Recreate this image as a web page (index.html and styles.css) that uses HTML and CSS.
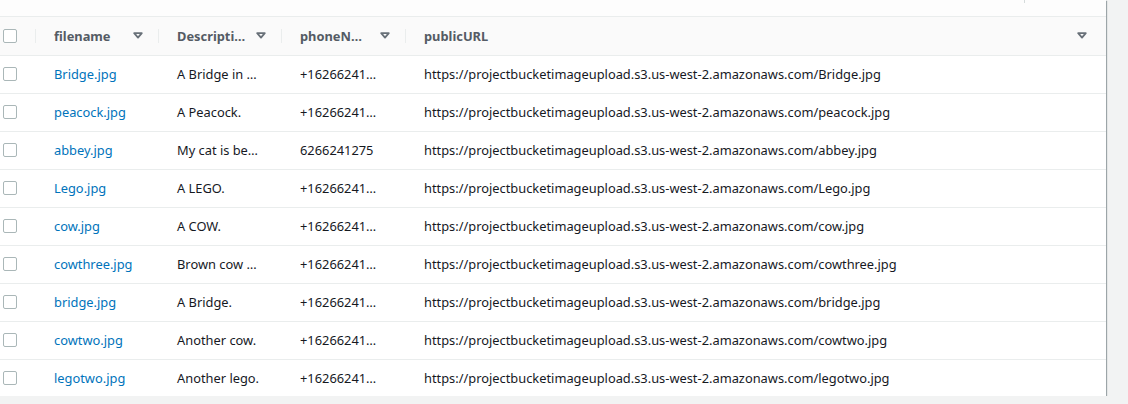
FILE: index.html
```html
<!DOCTYPE html>
<html>
<head>
<meta charset="utf-8">
<link rel="stylesheet" href="styles.css">
</head>
<body>
<div class="card">
  <div class="top"><span class="tick"></span></div>
  <table class="grid">
    <colgroup>
      <col class="c-check"><col class="c-file"><col class="c-desc"><col class="c-phone"><col class="c-url">
    </colgroup>
    <thead>
      <tr>
        <th class="check"><span class="box"></span></th>
        <th><div class="hd"><span class="lbl">filename</span><svg class="caret" viewBox="0 0 10 7" width="10" height="7"><path d="M1.2 1.2 H8.8 L5 5.6 Z" fill="none" stroke="#687078" stroke-width="1.8" stroke-linejoin="round"/></svg></div></th>
        <th class="sep"><div class="hd"><span class="lbl">Descripti…</span><svg class="caret" viewBox="0 0 10 7" width="10" height="7"><path d="M1.2 1.2 H8.8 L5 5.6 Z" fill="none" stroke="#687078" stroke-width="1.8" stroke-linejoin="round"/></svg></div></th>
        <th class="sep"><div class="hd"><span class="lbl">phoneN…</span><svg class="caret" viewBox="0 0 10 7" width="10" height="7"><path d="M1.2 1.2 H8.8 L5 5.6 Z" fill="none" stroke="#687078" stroke-width="1.8" stroke-linejoin="round"/></svg></div></th>
        <th class="sep last"><div class="hd"><span class="lbl">publicURL</span><svg class="caret" viewBox="0 0 10 7" width="10" height="7"><path d="M1.2 1.2 H8.8 L5 5.6 Z" fill="none" stroke="#687078" stroke-width="1.8" stroke-linejoin="round"/></svg></div></th>
      </tr>
    </thead>
    <tbody>
      <tr><td class="check"><span class="box"></span></td><td><a>Bridge.jpg</a></td><td>A Bridge in …</td><td>+16266241…</td><td>https://projectbucketimageupload.s3.us-west-2.amazonaws.com/Bridge.jpg</td></tr>
      <tr><td class="check"><span class="box"></span></td><td><a>peacock.jpg</a></td><td>A Peacock.</td><td>+16266241…</td><td>https://projectbucketimageupload.s3.us-west-2.amazonaws.com/peacock.jpg</td></tr>
      <tr><td class="check"><span class="box"></span></td><td><a>abbey.jpg</a></td><td>My cat is be…</td><td>6266241275</td><td>https://projectbucketimageupload.s3.us-west-2.amazonaws.com/abbey.jpg</td></tr>
      <tr><td class="check"><span class="box"></span></td><td><a>Lego.jpg</a></td><td>A LEGO.</td><td>+16266241…</td><td>https://projectbucketimageupload.s3.us-west-2.amazonaws.com/Lego.jpg</td></tr>
      <tr><td class="check"><span class="box"></span></td><td><a>cow.jpg</a></td><td>A COW.</td><td>+16266241…</td><td>https://projectbucketimageupload.s3.us-west-2.amazonaws.com/cow.jpg</td></tr>
      <tr><td class="check"><span class="box"></span></td><td><a>cowthree.jpg</a></td><td>Brown cow …</td><td>+16266241…</td><td>https://projectbucketimageupload.s3.us-west-2.amazonaws.com/cowthree.jpg</td></tr>
      <tr><td class="check"><span class="box"></span></td><td><a>bridge.jpg</a></td><td>A Bridge.</td><td>+16266241…</td><td>https://projectbucketimageupload.s3.us-west-2.amazonaws.com/bridge.jpg</td></tr>
      <tr><td class="check"><span class="box"></span></td><td><a>cowtwo.jpg</a></td><td>Another cow.</td><td>+16266241…</td><td>https://projectbucketimageupload.s3.us-west-2.amazonaws.com/cowtwo.jpg</td></tr>
      <tr><td class="check"><span class="box"></span></td><td><a>legotwo.jpg</a></td><td>Another lego.</td><td>+16266241…</td><td>https://projectbucketimageupload.s3.us-west-2.amazonaws.com/legotwo.jpg</td></tr>
    </tbody>
  </table>
</div>
</body>
</html>
```
FILE: styles.css
```css
html, body {
  margin: 0;
  padding: 0;
  background: #f2f3f3;
}
body {
  font-family: "Noto Sans", "Open Sans", sans-serif;
  font-size: 12.85px;
  color: #16191f;
}
.card {
  width: 1106px;
  background: #ffffff;
  box-shadow: 0 1px 1px 0 rgba(0, 28, 36, 0.45), 1px 1px 1px 0 rgba(0, 28, 36, 0.3);
}
.top {
  height: 17px;
  background: #fdfdfd;
  border-bottom: 1px solid #eaeded;
  box-sizing: border-box;
  position: relative;
}
.tick {
  position: absolute;
  left: 1024px;
  top: 0;
  width: 1px;
  height: 3px;
  background: #d5dbdb;
}
.grid {
  width: 1106px;
  border-collapse: collapse;
  table-layout: fixed;
}
.c-check { width: 35px; }
.c-file { width: 123px; }
.c-desc { width: 123px; }
.c-phone { width: 124px; }
.c-url { width: auto; }
th, td {
  height: 38px;
  box-sizing: border-box;
  padding: 0 19px;
  text-align: left;
  white-space: nowrap;
  overflow: hidden;
  border-bottom: 1px solid #eaeded;
}
th {
  background: #fafafa;
  color: #545b64;
  font-weight: 700;
  position: relative;
}
th:not(.check)::before {
  content: "";
  position: absolute;
  left: 0;
  top: 12px;
  bottom: 12px;
  width: 1px;
  background: #eaeded;
}
th.check, td.check {
  padding: 0 0 0 3px;
}
tbody tr:last-child td {
  border-bottom: none;
  height: 37px;
}
.hd {
  display: flex;
  align-items: center;
  justify-content: space-between;
}
.caret {
  display: block;
  margin-right: -4px;
}
th.last .caret {
  margin-right: 0;
}
.box {
  display: block;
  width: 14px;
  height: 14px;
  box-sizing: border-box;
  border: 1px solid #aab7b8;
  border-radius: 2px;
  background: #ffffff;
}
a {
  color: #0073bb;
  text-decoration: none;
}
```
